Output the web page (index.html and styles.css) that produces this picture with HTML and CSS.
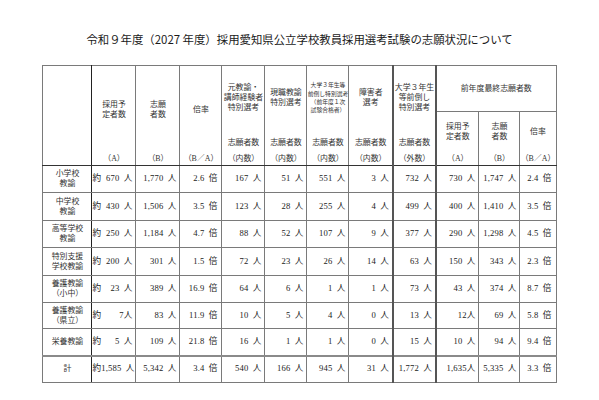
FILE: index.html
```html
<!DOCTYPE html>
<html lang="ja">
<head>
<meta charset="utf-8">
<link rel="stylesheet" href="styles.css">
</head>
<body>
<div class="page">
  <h1 class="title">令和９年度（2027 年度）採用愛知県公立学校教員採用選考試験の志願状況について</h1>
  <table class="grid">
    <colgroup>
      <col class="w49"><col class="w44"><col class="w44"><col class="w42"><col class="w43"><col class="w42"><col class="w42"><col class="w44"><col class="w43"><col class="w43"><col class="w41"><col class="w36">
    </colgroup>
    <thead>
      <tr class="h1">
        <th rowspan="2" class="c1"></th>
        <th rowspan="2"><div class="hc"><div class="main m-low">採用予<br>定者数</div><div class="paren">（A）</div></div></th>
        <th rowspan="2"><div class="hc"><div class="main m-low">志願<br>者数</div><div class="paren">（B）</div></div></th>
        <th rowspan="2"><div class="hc"><div class="main m-low">倍率</div><div class="paren">（B／A）</div></div></th>
        <th rowspan="2"><div class="hc"><div class="main">元教諭・<br>講師経験者<br>特別選考</div><div class="sub">志願者数</div><div class="paren">（内数）</div></div></th>
        <th rowspan="2"><div class="hc"><div class="main">現職教諭<br>特別選考</div><div class="sub">志願者数</div><div class="paren">（内数）</div></div></th>
        <th rowspan="2"><div class="hc"><div class="main tiny">大学３年生等<br>前倒し特別選考<br>（前年度１次<br>試験合格者）</div><div class="sub">志願者数</div><div class="paren">（内数）</div></div></th>
        <th rowspan="2" class="thick-r"><div class="hc"><div class="main">障害者<br>選考</div><div class="sub">志願者数</div><div class="paren">（内数）</div></div></th>
        <th rowspan="2" class="thick-r"><div class="hc"><div class="main">大学３年生<br>等前倒し<br>特別選考</div><div class="sub">志願者数</div><div class="paren">（外数）</div></div></th>
        <th colspan="3" class="prev">前年度最終志願者数</th>
      </tr>
      <tr class="h2">
        <th><div class="hc2"><div class="main">採用予<br>定者数</div><div class="paren">（A）</div></div></th>
        <th><div class="hc2"><div class="main">志願<br>者数</div><div class="paren">（B）</div></div></th>
        <th><div class="hc2"><div class="main">倍率</div><div class="paren">（B／A）</div></div></th>
      </tr>
    </thead>
    <tbody>
      <tr>
        <th class="c1">小学校<br>教諭</th>
        <td class="approx"><span class="yaku">約</span><span>670 人</span></td>
        <td>1,770 人</td><td class="ratio">2.6 倍</td><td>167 人</td><td>51 人</td><td>551 人</td><td class="thick-r">3 人</td><td class="thick-r">732 人</td><td>730 人</td><td>1,747 人</td><td class="ratio">2.4 倍</td>
      </tr>
      <tr>
        <th class="c1">中学校<br>教諭</th>
        <td class="approx"><span class="yaku">約</span><span>430 人</span></td>
        <td>1,506 人</td><td class="ratio">3.5 倍</td><td>123 人</td><td>28 人</td><td>255 人</td><td class="thick-r">4 人</td><td class="thick-r">499 人</td><td>400 人</td><td>1,410 人</td><td class="ratio">3.5 倍</td>
      </tr>
      <tr>
        <th class="c1">高等学校<br>教諭</th>
        <td class="approx"><span class="yaku">約</span><span>250 人</span></td>
        <td>1,184 人</td><td class="ratio">4.7 倍</td><td>88 人</td><td>52 人</td><td>107 人</td><td class="thick-r">9 人</td><td class="thick-r">377 人</td><td>290 人</td><td>1,298 人</td><td class="ratio">4.5 倍</td>
      </tr>
      <tr>
        <th class="c1">特別支援<br>学校教諭</th>
        <td class="approx"><span class="yaku">約</span><span>200 人</span></td>
        <td>301 人</td><td class="ratio">1.5 倍</td><td>72 人</td><td>23 人</td><td>26 人</td><td class="thick-r">14 人</td><td class="thick-r">63 人</td><td>150 人</td><td>343 人</td><td class="ratio">2.3 倍</td>
      </tr>
      <tr>
        <th class="c1">養護教諭<br>（小中）</th>
        <td class="approx"><span class="yaku">約</span><span>23 人</span></td>
        <td>389 人</td><td class="ratio">16.9 倍</td><td>64 人</td><td>6 人</td><td>1 人</td><td class="thick-r">1 人</td><td class="thick-r">73 人</td><td>43 人</td><td>374 人</td><td class="ratio">8.7 倍</td>
      </tr>
      <tr>
        <th class="c1">養護教諭<br>（県立）</th>
        <td class="approx"><span class="yaku">約</span><span>7人</span></td>
        <td>83 人</td><td class="ratio">11.9 倍</td><td>10 人</td><td>5 人</td><td>4 人</td><td class="thick-r">0 人</td><td class="thick-r">13 人</td><td>12人</td><td>69 人</td><td class="ratio">5.8 倍</td>
      </tr>
      <tr>
        <th class="c1">栄養教諭</th>
        <td class="approx"><span class="yaku">約</span><span>5 人</span></td>
        <td>109 人</td><td class="ratio">21.8 倍</td><td>16 人</td><td>1 人</td><td>1 人</td><td class="thick-r">0 人</td><td class="thick-r">15 人</td><td>10 人</td><td>94 人</td><td class="ratio">9.4 倍</td>
      </tr>
      <tr class="total">
        <th class="c1">計</th>
        <td class="approx tight"><span class="yaku">約</span><span>1,585 人</span></td>
        <td>5,342 人</td><td class="ratio">3.4 倍</td><td>540 人</td><td>166 人</td><td>945 人</td><td class="thick-r">31 人</td><td class="thick-r">1,772 人</td><td>1,635人</td><td>5,335 人</td><td class="ratio">3.3 倍</td>
      </tr>
    </tbody>
  </table>
</div>
</body>
</html>
```

FILE: styles.css
```css
html, body {
  margin: 0;
  padding: 0;
  background: #ffffff;
}

.page {
  width: 599px;
  height: 400px;
  display: flex;
  flex-direction: column;
  align-items: center;
  color: #222;
  font-family: "Liberation Serif", "Noto Sans CJK JP", serif;
}

.title {
  margin: 31px 0 0 0;
  font-family: "Noto Sans CJK JP", sans-serif;
  font-weight: 400;
  font-size: 11.4px;
  line-height: 16px;
  color: #1a1a1a;
  letter-spacing: 0;
}

.grid {
  margin-top: 18px;
  border-collapse: collapse;
  table-layout: fixed;
  width: 513px;
  border: 1.5px solid #222;
  font-size: 8.6px;
  line-height: 1.15;
}

.w49 { width: 49px; }
.w44 { width: 44px; }
.w43 { width: 43px; }
.w42 { width: 42px; }
.w41 { width: 41px; }
.w36 { width: 36px; }

.grid th,
.grid td {
  border: 1px solid #7a7a7a;
  padding: 0;
  font-weight: 400;
  overflow: hidden;
  white-space: nowrap;
}

.grid th {
  text-align: center;
  font-size: 7.9px;
  color: #333;
}

.grid td {
  text-align: right;
  padding-right: 3px;
  word-spacing: 0.22em;
  letter-spacing: 0.02em;
}

.grid .c1 {
  border-right: 1.5px solid #222;
  color: #333;
  line-height: 1.25;
}

.grid .thick-r {
  border-right: 2px solid #555;
}

thead tr.h1 { height: 46px; }
thead tr.h2 { height: 54px; }

thead th {
  vertical-align: top;
}

thead tr.h2 th,
thead tr.h1 th[rowspan] {
  border-bottom: 1.5px solid #333;
}

.prev {
  vertical-align: middle !important;
}

.hc {
  height: 99px;
  display: flex;
  flex-direction: column;
  align-items: center;
}

.hc2 {
  height: 53px;
  display: flex;
  flex-direction: column;
  align-items: center;
}

.main {
  flex: 1;
  display: flex;
  align-items: center;
  justify-content: center;
  padding-bottom: 6px;
  line-height: 1.3;
}

.main.m-low {
  padding-bottom: 0;
  padding-top: 2px;
}

.hc2 .main {
  padding-bottom: 0;
}

.main.tiny {
  font-size: 5.8px;
  line-height: 1.45;
}

.sub {
  height: 14px;
  line-height: 14px;
  margin-bottom: 2px;
}

.paren {
  height: 13px;
  line-height: 13px;
}

tbody tr { height: 27px; }
tbody tr:nth-child(2),
tbody tr:nth-child(4) { height: 28px; }
tbody tr:nth-child(6) { height: 26px; }

.approx {
  padding-left: 1px;
}

.approx span {
  display: inline-block;
}

.approx .yaku {
  float: left;
}

.approx.tight .yaku {
  float: none;
}

.ratio {
  padding-right: 4px !important;
}

tr.total th,
tr.total td {
  border-top: 2.5px solid #8a8a8a;
}
```
